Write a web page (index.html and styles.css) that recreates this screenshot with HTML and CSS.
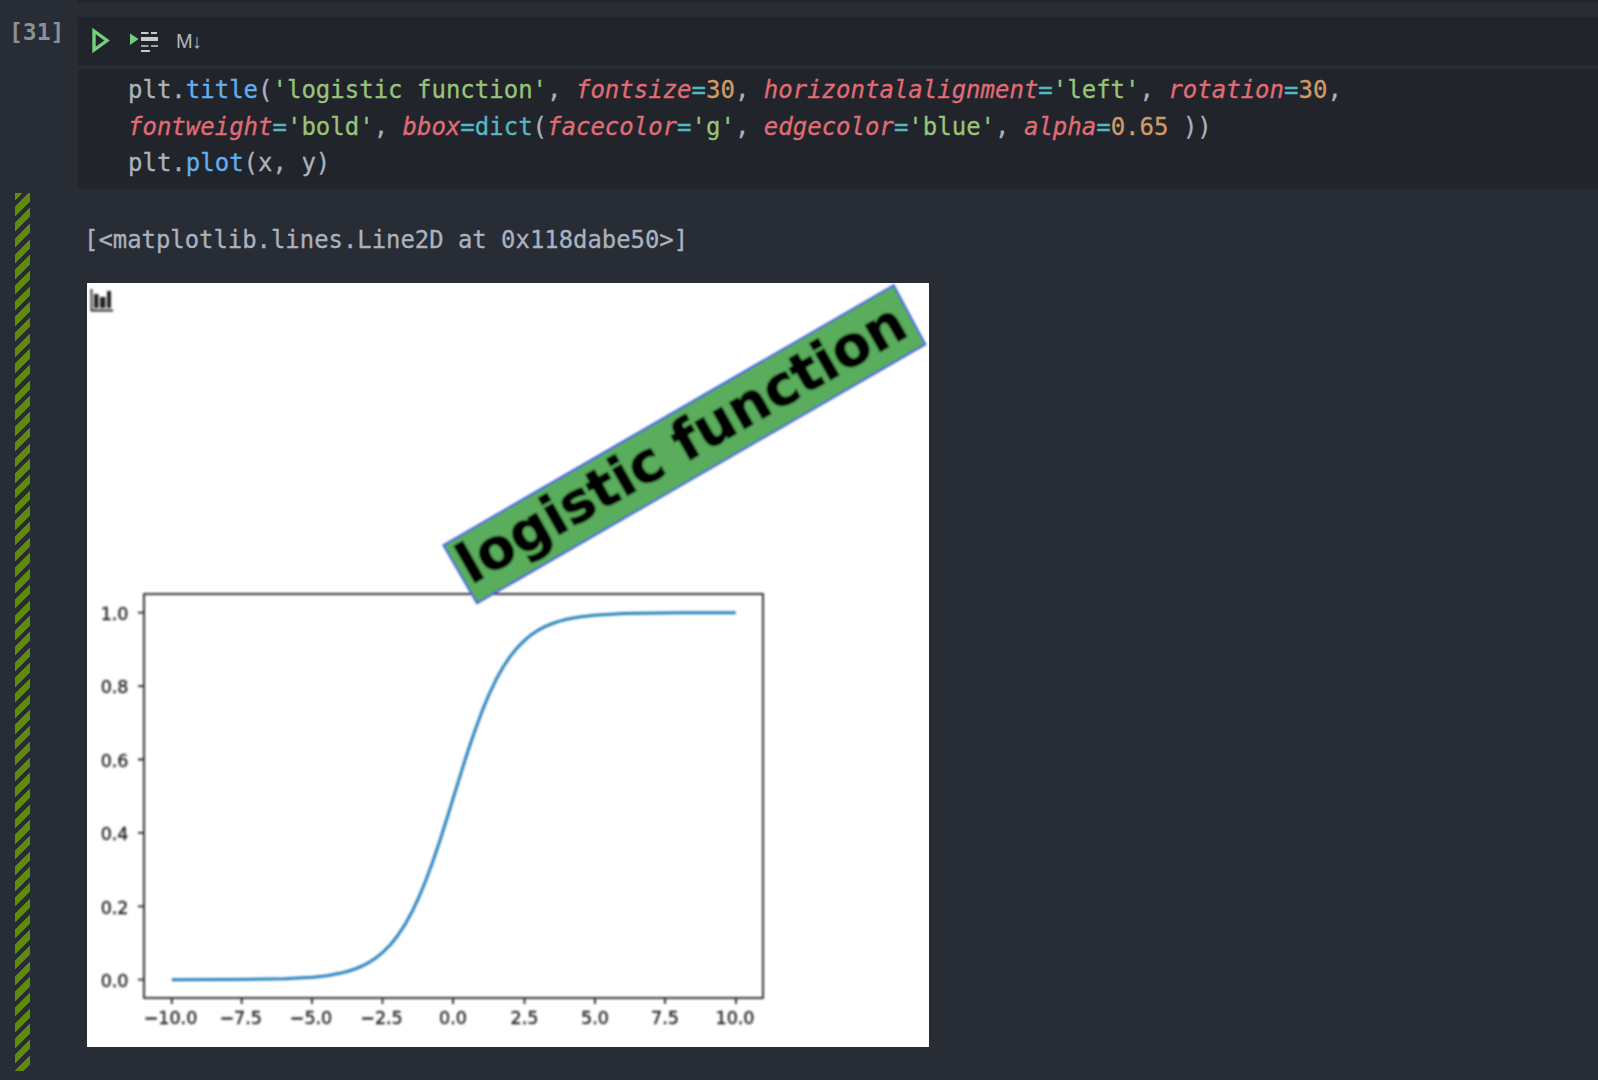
FILE: index.html
```html
<!DOCTYPE html>
<html lang="en">
<head>
<meta charset="utf-8">
<title>Notebook cell</title>
<link rel="stylesheet" href="styles.css">
</head>
<body>
<div class="top-band"></div>
<section class="cell">
  <div class="prompt">[31]</div>
  <div class="input">
    <div class="toolbar">
      <svg class="icon-run" width="24" height="28" viewBox="0 0 24 28"><path d="M4 4 L17 13.500 L4 23 Z" fill="none" stroke="#74d07f" stroke-width="3.400"/></svg>
      <svg class="icon-run-all" width="32" height="24" viewBox="0 0 32 24">
        <path d="M2 4.500 L10.500 10 L2 16 Z" fill="#74d07f"/>
        <path d="M13 4h7.500M23 4h6" stroke="#c9c9c9" stroke-width="2" fill="none"/>
        <path d="M13 10h17" stroke="#c9c9c9" stroke-width="4" fill="none"/>
        <path d="M13 17h7.500M23 17h7" stroke="#c9c9c9" stroke-width="1.500" fill="none"/>
        <path d="M13 22h9" stroke="#c9c9c9" stroke-width="2" fill="none"/>
      </svg>
      <span class="md">M<span class="md-arrow">↓</span></span>
    </div>
    <pre class="code"><span class="v">plt.</span><span class="f">title</span><span class="v">(</span><span class="s">'logistic function'</span><span class="v">, </span><span class="k">fontsize</span><span class="o">=</span><span class="n">30</span><span class="v">, </span><span class="k">horizontalalignment</span><span class="o">=</span><span class="s">'left'</span><span class="v">, </span><span class="k">rotation</span><span class="o">=</span><span class="n">30</span><span class="v">,</span>
<span class="k">fontweight</span><span class="o">=</span><span class="s">'bold'</span><span class="v">, </span><span class="k">bbox</span><span class="o">=</span><span class="o">dict</span><span class="v">(</span><span class="k">facecolor</span><span class="o">=</span><span class="s">'g'</span><span class="v">, </span><span class="k">edgecolor</span><span class="o">=</span><span class="s">'blue'</span><span class="v">, </span><span class="k">alpha</span><span class="o">=</span><span class="n">0.65</span><span class="v"> ))</span>
<span class="v">plt.</span><span class="f">plot</span><span class="v">(x, y)</span></pre>
  </div>
</section>
<section class="output">
  <div class="stripe"></div>
  <div class="output-body">
    <pre class="result">[&lt;matplotlib.lines.Line2D at 0x118dabe50&gt;]</pre>
    <svg class="figure" width="842" height="764" viewBox="87 283 842 764">
      <defs>
        <filter id="soft" filterUnits="userSpaceOnUse" x="87" y="283" width="842" height="764">
          <feGaussianBlur stdDeviation="0.8"/>
        </filter>
      </defs>
      <rect x="87" y="283" width="842" height="764" fill="#fff"/>
      <g filter="url(#soft)">
        <path class="stats" d="M91.500 289V310.500H113"/>
        <path class="stats-bar" d="M94 294h4.500v14H94zM100 297h5.500v11H100zM107 291h4v17h-4z"/>
        <rect class="axes" x="144" y="594" width="619" height="404"/>
        <path class="ticks" d="M171.800 998v6M241.700 998v6M312 998v6M382.500 998v6M453 998v6M524.500 998v6M595 998v6M665 998v6M736 998v6M144 979.700h-6M144 906.300h-6M144 832.900h-6M144 759.500h-6M144 686.100h-6M144 612.700h-6"/>
        <polyline class="curve" points="171.800,979.700 228.200,979.600 284.600,978.800 312.800,977.200 326.900,975.700 341,973.100 348.050,971.300 355.100,969 362.150,966 369.200,962.300 376.250,957.700 383.300,951.800 390.350,944.700 397.400,936 404.450,925.400 411.500,912.800 418.550,898 425.600,881 432.650,862 439.700,841.200 446.750,819 453.800,796.200 460.850,773.400 467.900,751.200 474.950,730.400 482,711.400 489.050,694.400 496.100,679.600 503.150,667 510.200,656.400 517.250,647.700 524.300,640.600 531.350,634.700 538.400,630.100 545.450,626.400 552.500,623.500 559.550,621.100 566.600,619.300 580.700,616.700 594.800,615.200 623,613.600 679.400,612.800 735.800,612.700"/>
        <polygon class="title-box" points="443.300,545.200 893.700,285.300 925.300,344.400 477,603.300"/>
        <text class="title-text" transform="translate(471 585) rotate(-29.700)">logistic function</text>
        <g class="tick-x">
          <text x="170.500" y="1024">−10.0</text>
          <text x="240.700" y="1024">−7.5</text>
          <text x="311" y="1024">−5.0</text>
          <text x="381.500" y="1024">−2.5</text>
          <text x="453" y="1024">0.0</text>
          <text x="524.500" y="1024">2.5</text>
          <text x="595" y="1024">5.0</text>
          <text x="665" y="1024">7.5</text>
          <text x="735" y="1024">10.0</text>
        </g>
        <g class="tick-y">
          <text x="128.500" y="987">0.0</text>
          <text x="128.500" y="913.600">0.2</text>
          <text x="128.500" y="840.200">0.4</text>
          <text x="128.500" y="766.800">0.6</text>
          <text x="128.500" y="693.400">0.8</text>
          <text x="128.500" y="620">1.0</text>
        </g>
      </g>
    </svg>
  </div>
</section>
</body>
</html>
```
FILE: styles.css
```css
* { box-sizing: border-box; }
html, body { margin: 0; padding: 0; }
body {
  width: 1598px;
  height: 1080px;
  overflow: hidden;
  background: #282c34;
  font-family: "DejaVu Sans Mono", monospace;
}
.top-band {
  height: 3px;
  margin-left: 78px;
  background: #22262c;
}
.cell {
  display: grid;
  grid-template-columns: 78px 1fr;
  padding-top: 14px;
}
.prompt {
  padding: 2px 0 0 9px;
  font-size: 23px;
  line-height: 27px;
  font-weight: 700;
  color: #8b8f96;
}
.input {
  display: flex;
  flex-direction: column;
  gap: 4px;
}
.toolbar {
  display: flex;
  align-items: center;
  height: 48px;
  padding-left: 12px;
  background: #21252b;
}
.icon-run { margin-right: 14px; }
.icon-run-all { margin-right: 16px; }
.md {
  font-family: "Liberation Sans", sans-serif;
  font-size: 20px;
  color: #b4b7bb;
  display: flex;
  align-items: baseline;
}
.md-arrow { font-size: 20px; margin-left: -1px; }
.code {
  margin: 0;
  height: 120px;
  padding: 3px 0 0 50px;
  font-family: "DejaVu Sans Mono", monospace;
  font-size: 24px;
  line-height: 36.700px;
  background: #21252b;
  -webkit-text-stroke: 0.3px;
}
.v { color: #abb2bf; }
.f { color: #61afef; }
.s { color: #98c379; }
.k { color: #e06c75; font-style: italic; }
.o { color: #56b6c2; }
.n { color: #d19a66; }
.output {
  display: flex;
  margin-top: 4px;
}
.stripe {
  width: 15px;
  height: 878px;
  margin-left: 15px;
  background: repeating-linear-gradient(-45deg, transparent 0 4.500px, #5f8a0a 4.500px 11.100px);
}
.output-body {
  padding-left: 54px;
}
.result {
  margin: 0;
  padding-top: 29px;
  height: 90px;
  font-family: "DejaVu Sans Mono", monospace;
  font-size: 23.900px;
  line-height: 36px;
  color: #abb2bf;
  -webkit-text-stroke: 0.3px;
}
.figure { display: block; margin-left: 3px; }
.stats { fill: none; stroke: #222; stroke-width: 1.800; }
.stats-bar { fill: #222; }
.axes { fill: none; stroke: #222; stroke-width: 1.800; }
.ticks { fill: none; stroke: #222; stroke-width: 1.800; }
.curve { fill: none; stroke: #2a82bd; stroke-width: 3; stroke-linejoin: round; }
.title-box { fill: #5aad5c; stroke: #3a52e0; stroke-width: 1.800; }
.title-text {
  font-family: "DejaVu Sans", sans-serif;
  font-weight: 700;
  font-size: 55.500px;
  fill: #000;
  stroke: #000;
  stroke-width: 1.200px;
}
.tick-x text, .tick-y text {
  font-family: "DejaVu Sans", sans-serif;
  font-size: 17.500px;
  fill: #222;
  stroke: #222;
  stroke-width: 0.350px;
}
.tick-x text { text-anchor: middle; }
.tick-y text { text-anchor: end; }
```
